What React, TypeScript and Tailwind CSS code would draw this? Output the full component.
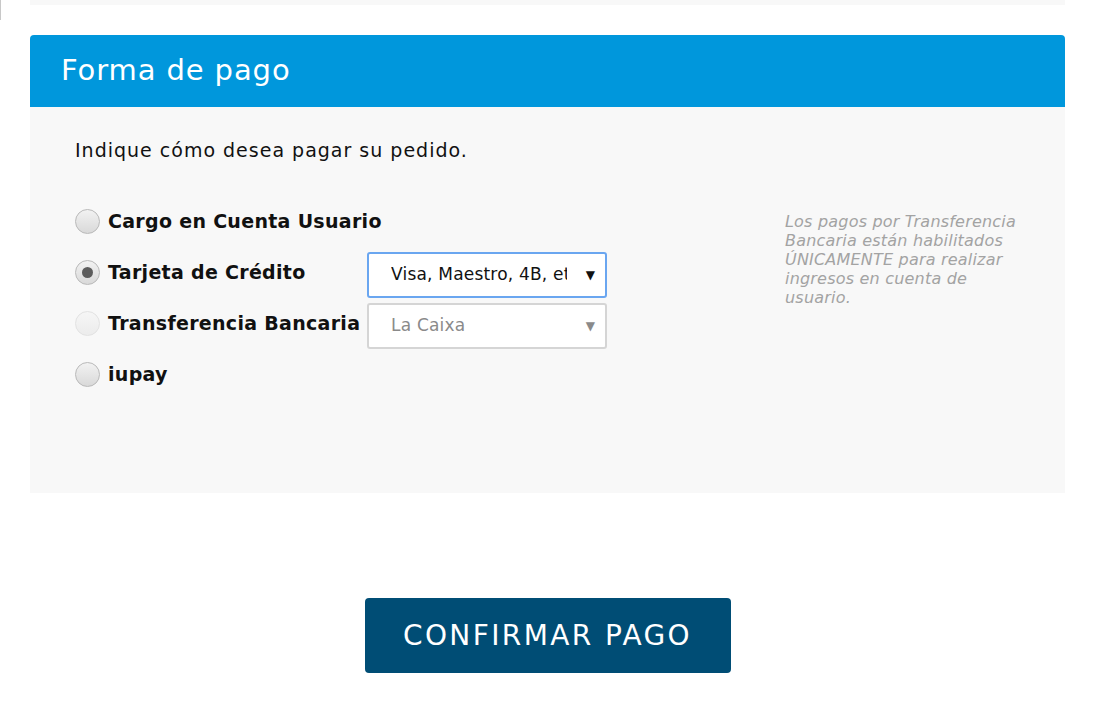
const font = { fontFamily: '"DejaVu Sans", "Liberation Sans", sans-serif' }

type Method = {
  label: string
  checked?: boolean
  disabled?: boolean
  select?: { value: string; active: boolean }
}

const methods: Method[] = [
  { label: "Cargo en Cuenta Usuario" },
  { label: "Tarjeta de Crédito", checked: true, select: { value: "Visa, Maestro, 4B, etc", active: true } },
  { label: "Transferencia Bancaria", disabled: true, select: { value: "La Caixa", active: false } },
  { label: "iupay" },
]

function Radio({ checked, disabled }: { checked?: boolean; disabled?: boolean }) {
  return (
    <span
      className={
        "flex h-[25px] w-[25px] shrink-0 items-center justify-center rounded-full border " +
        (disabled
          ? "border-[#e2e2e2] bg-gradient-to-b from-[#f6f6f6] to-[#ececec]"
          : "border-[#b9b9b9] bg-gradient-to-b from-[#f2f2f2] to-[#d9d9d9]")
      }
    >
      {checked && <span className="h-[11px] w-[11px] rounded-full bg-[#5c5c5c]" />}
    </span>
  )
}

function Select({ value, active }: { value: string; active: boolean }) {
  return (
    <div
      className={
        "mt-[6px] flex h-[46px] w-[240px] items-center bg-white pl-[22px] pr-[10px] rounded-[3px] border-2 " +
        (active ? "border-[#6aa6f0] text-[#111]" : "border-[#d5d5d5] text-[#8a8a8a]")
      }
    >
      <span className="w-[176px] overflow-hidden whitespace-nowrap text-[17px] tracking-[0.2px]">{value}</span>
      <span className={"ml-auto text-[12px] " + (active ? "text-[#111]" : "text-[#8a8a8a]")}>▼</span>
    </div>
  )
}

export default function App() {
  return (
    <div className="relative min-h-[702px] bg-white" style={font}>
      <div className="absolute left-0 top-0 h-[20px] w-px bg-[#c8c8c8]" />
      <div className="mx-[30px] h-[5px] bg-[#f8f8f8]" />

      <section className="mx-[30px] mt-[30px]">
        <div className="flex h-[72px] items-center rounded-t-[4px] bg-[#0097dc] px-[31px]">
          <h2 className="text-[29px] font-normal tracking-[0.9px] text-white">Forma de pago</h2>
        </div>

        <div className="h-[386px] bg-[#f8f8f8] pl-[45px] pr-[48px] pt-[29px]">
          <p className="text-[19px] tracking-[1px] text-[#111]">Indique cómo desea pagar su pedido.</p>

          <div className="mt-[31px] flex">
            <div className="flex flex-col">
              {methods.map((m) => (
                <div key={m.label} className="flex h-[51px] items-center">
                  <Radio checked={m.checked} disabled={m.disabled} />
                  <span className="ml-[8px] w-[259px] whitespace-nowrap text-[19px] font-bold tracking-[0.3px] text-[#111]">
                    {m.label}
                  </span>
                  {m.select && <Select value={m.select.value} active={m.select.active} />}
                </div>
              ))}
            </div>

            <p className="ml-auto mt-[16px] w-[232px] text-[16px] italic leading-[19px] tracking-[0.2px] text-[#a3a3a3]">
              Los pagos por Transferencia Bancaria están habilitados ÚNICAMENTE para realizar ingresos en cuenta de usuario.
            </p>
          </div>
        </div>
      </section>

      <div className="mt-[105px] flex justify-center">
        <button className="flex h-[75px] w-[366px] items-center justify-center rounded-[4px] bg-[#004d75] text-[28px] tracking-[2.4px] text-white">
          CONFIRMAR PAGO
        </button>
      </div>
    </div>
  )
}
